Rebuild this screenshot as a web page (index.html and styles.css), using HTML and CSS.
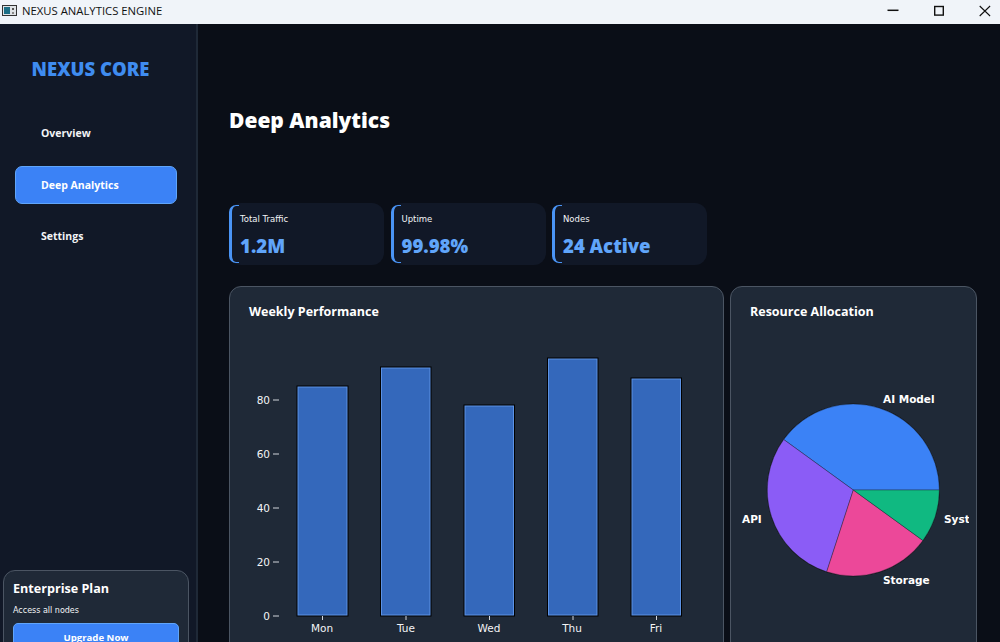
FILE: index.html
```html
<!DOCTYPE html>
<html lang="en">
<head>
<meta charset="utf-8">
<title>Nexus Analytics Engine</title>
<link rel="stylesheet" href="styles.css">
</head>
<body>
<div class="window">
  <header class="titlebar">
    <svg class="app-icon" width="15" height="11" viewBox="0 0 15 11"><rect x=".5" y=".5" width="14" height="10" fill="#dfe3e6" stroke="#333"/><rect x="2" y="2" width="6" height="7" fill="#1c6f86"/><rect x="10" y="3" width="2" height="2" fill="#555"/><rect x="10" y="7" width="2" height="2" fill="#888"/></svg>
    <span class="app-title">NEXUS ANALYTICS ENGINE</span>
    <div class="win-controls">
      <svg width="14" height="14" viewBox="0 0 14 14"><path d="M1.500 6.300h11" stroke="#111" stroke-width="1.500"/></svg>
      <svg width="14" height="14" viewBox="0 0 14 14"><rect x="2.700" y="2.500" width="8.600" height="8.600" fill="none" stroke="#111" stroke-width="1.400"/></svg>
      <svg width="14" height="14" viewBox="0 0 14 14"><path d="M1.700 2l10.400 10M12.100 2L1.700 12" stroke="#111" stroke-width="1.100"/></svg>
    </div>
  </header>
  <div class="app">
    <aside class="sidebar">
      <div class="brand">NEXUS CORE</div>
      <nav class="nav">
        <a class="nav-item">Overview</a>
        <a class="nav-item active">Deep Analytics</a>
        <a class="nav-item">Settings</a>
      </nav>
      <div class="plan">
        <div class="plan-name">Enterprise Plan</div>
        <div class="plan-desc">Access all nodes</div>
        <button class="plan-btn">Upgrade Now</button>
      </div>
    </aside>
    <main class="main">
      <h1 class="page-title">Deep Analytics</h1>
      <section class="stats">
        <div class="stat"><div class="stat-label">Total Traffic</div><div class="stat-value">1.2M</div></div>
        <div class="stat"><div class="stat-label">Uptime</div><div class="stat-value">99.98%</div></div>
        <div class="stat"><div class="stat-label">Nodes</div><div class="stat-value">24 Active</div></div>
      </section>
      <section class="charts">
        <div class="card card-wide">
          <h2 class="card-title">Weekly Performance</h2>
          <svg class="chart" width="494" height="320" viewBox="229 322 494 320">
            <g class="bars">
              <rect x="296.500" y="385.500" width="52" height="231"/>
              <rect x="380" y="366.500" width="51.500" height="250"/>
              <rect x="463.500" y="404.500" width="51.500" height="212"/>
              <rect x="547" y="357.500" width="51.500" height="259"/>
              <rect x="630.500" y="377.500" width="51.500" height="239"/>
            </g>
            <g class="bars-inner">
              <rect x="298" y="387" width="49" height="228"/>
              <rect x="381.500" y="368" width="48.500" height="247"/>
              <rect x="465" y="406" width="48.500" height="209"/>
              <rect x="548.500" y="359" width="48.500" height="256"/>
              <rect x="632" y="379" width="48.500" height="236"/>
            </g>
            <path class="ticks" d="M273 400h6M273 454h6M273 508h6M273 562h6M273 616h6M322.500 616v4M406 616v4M489.500 616v4M573 616v4M656.500 616v4"/>
            <g class="axis-y">
              <text x="270" y="404">80</text>
              <text x="270" y="458">60</text>
              <text x="270" y="512">40</text>
              <text x="270" y="566">20</text>
              <text x="270" y="620">0</text>
            </g>
            <g class="axis-x">
              <text x="322" y="632">Mon</text>
              <text x="406" y="632">Tue</text>
              <text x="489" y="632">Wed</text>
              <text x="572" y="632">Thu</text>
              <text x="656" y="632">Fri</text>
            </g>
          </svg>
        </div>
        <div class="card card-narrow">
          <h2 class="card-title">Resource Allocation</h2>
          <svg class="chart" width="239" height="320" viewBox="730 322 239 320">
            <circle class="pie-rim" cx="853.300" cy="490" r="86.500"/>
            <g class="pie">
              <path fill="#3b82f6" d="M853.300 490L783.700 439.500A86 86 0 0 1 939.300 490Z"/>
              <path fill="#8b5cf6" d="M853.300 490L826.700 571.800A86 86 0 0 1 783.700 439.500Z"/>
              <path fill="#ec4899" d="M853.300 490L922.900 540.500A86 86 0 0 1 826.700 571.800Z"/>
              <path fill="#10b981" d="M853.300 490H939.300A86 86 0 0 1 922.900 540.500Z"/>
            </g>
            <g class="pie-labels">
              <text x="883" y="403">AI Model</text>
              <text x="742" y="523">API</text>
              <text x="944" y="523">Syst</text>
              <text x="883" y="584">Storage</text>
            </g>
          </svg>
        </div>
      </section>
    </main>
  </div>
</div>
</body>
</html>
```
FILE: styles.css
```css
* { box-sizing: border-box; }
html, body { margin: 0; height: 100%; overflow: hidden; }
body { font-family: "DejaVu Sans", sans-serif; color: #fff; background: #0a0e17; }
.window { width: 1000px; height: 642px; display: flex; flex-direction: column; overflow: hidden; }
.titlebar { height: 24px; flex: none; background: #f0f4f9; display: flex; align-items: center; padding: 0 0 3px 2px; }
.app-icon { flex: none; margin-right: 5px; }
.app-title { font-family: "Open Sans", sans-serif; font-size: 11.300px; color: #111; }
.win-controls { margin-left: auto; display: flex; gap: 32px; padding-right: 8px; align-items: center; }
.app { flex: 1; display: flex; min-height: 0; }
.sidebar { width: 198px; flex: none; background: #111827; border-right: 2px solid #1f2937; display: flex; flex-direction: column; padding: 34px 0 0 0; }
.brand { font-family: "Open Sans", sans-serif; font-size: 18.500px; font-weight: 800; color: #3f8cf0; text-align: center; padding-right: 15px; line-height: 22px; }
.nav { margin-top: 34px; display: flex; flex-direction: column; gap: 13.500px; padding: 0 19px 0 15px; }
.nav-item { height: 38px; display: flex; align-items: center; padding-left: 26px; font-family: "Open Sans", sans-serif; font-size: 10.500px; font-weight: 700; color: #f3f4f6; border-radius: 7px; }
.nav-item.active { background: #3b82f6; border: 1px solid #60a5fa; color: #fff; padding-left: 25px; }
.plan { margin: auto 7px 0 3px; height: 90px; background: #1f2937; border: 1px solid #4b5563; border-radius: 12px; padding: 8px 9px 0 9px; overflow: hidden; flex: none; transform: translateY(18px); }
.plan-name { font-family: "Open Sans", sans-serif; font-size: 12.600px; font-weight: 700; line-height: 19px; }
.plan-desc { font-size: 8px; margin-top: 7px; line-height: 12px; color: #f3f4f6; }
.plan-btn { display: block; width: 100%; height: 28px; margin-top: 6px; background: #3b82f6; border: 1px solid #60a5fa; border-radius: 5px; color: #fff; font: 700 9.600px "Open Sans", sans-serif; }
.main { flex: 1; min-width: 0; padding: 0 23px 0 31px; overflow: hidden; }
.page-title { margin: 83px 0 0; font-family: "Open Sans", sans-serif; font-size: 21px; line-height: 26px; font-weight: 800; }
.stats { display: flex; gap: 6.500px; margin-top: 70px; }
.stat { position: relative; width: 155px; height: 62px; background: #111827; border-radius: 12px; padding: 10px 0 0 11px; }
.stat::before { content: ""; position: absolute; left: 0; top: 2px; bottom: 2px; width: 7px; border-left: 3px solid #4a94f5; border-top: 1.500px solid #4a94f5; border-bottom: 1.500px solid #4a94f5; border-radius: 7px 0 0 7px; }
.stat-label { font-size: 8.500px; line-height: 13px; color: #f3f4f6; }
.stat-value { font-family: "Open Sans", sans-serif; font-size: 18.600px; line-height: 24px; margin-top: 8px; font-weight: 800; color: #60a5fa; }
.charts { display: flex; gap: 6px; margin-top: 21px; }
.card { height: 400px; background: #1f2937; border: 1px solid #4b5563; border-radius: 12px; }
.card-wide { width: 495px; flex: none; }
.card-narrow { width: 247px; flex: none; }
.card-title { margin: 0; padding: 16px 0 0 19px; height: 35px; font-family: "Open Sans", sans-serif; font-size: 12.500px; line-height: 18px; font-weight: 700; }
.chart { display: block; margin-left: -1px; }
.bars rect { fill: #000; }
.bars-inner rect { fill: #3468bb; stroke: #5c92e4; stroke-width: 1; }
.ticks { stroke: #d1d5db; stroke-width: 1; fill: none; }
.axis-y text { font-size: 10.500px; fill: #f3f4f6; text-anchor: end; }
.axis-x text { font-size: 10.500px; fill: #f3f4f6; text-anchor: middle; }
.pie-rim { fill: #111; }
.pie path { stroke: #1f2937; stroke-width: .4; }
.pie-labels text { font-size: 10.500px; font-weight: 700; fill: #fff; }
```
